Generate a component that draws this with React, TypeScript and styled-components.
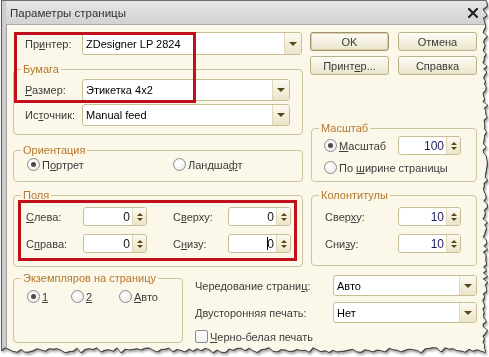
import React from 'react'
import styled, { createGlobalStyle } from 'styled-components'

const GlobalStyle = createGlobalStyle`
  html, body {
    margin: 0;
    padding: 0;
    background: #ffffff;
  }
  body {
    font-family: "Liberation Sans", Arial, sans-serif;
    font-size: 11px;
    color: #3a3a3a;
  }
`

// torn paper edge on the right and bottom of the screenshot
const tornEdge = (() => {
  let s = 17
  const r = () => {
    s = (s * 9301 + 49297) % 233280
    return s / 233280
  }
  const pts: string[] = ['0 0', '484px 0']
  for (let y = 3; y < 349; y += 3) {
    pts.push(`${(481 + r() * 5).toFixed(1)}px ${y}px`)
  }
  for (let x = 484; x > 0; x -= 4) {
    pts.push(`${x}px ${(347 + r() * 5).toFixed(1)}px`)
  }
  pts.push('0 350px')
  return `polygon(${pts.join(', ')})`
})()

const Page = styled.div`
  width: 489px;
  height: 357px;
  filter: drop-shadow(1px 0 0 #4a4a4a) drop-shadow(0 1px 0 #4a4a4a)
    drop-shadow(1px 2px 1px rgba(0, 0, 0, 0.35));
`

const Window = styled.div`
  margin-left: 1px;
  width: 487px;
  height: 354px;
  box-sizing: border-box;
  display: flex;
  flex-direction: column;
  background: #cdcdcd;
  border-left: 1px solid #5c5c5c;
  border-top: 1px solid #6e6e6e;
  padding-left: 4px;
  clip-path: ${tornEdge};
`

const TitleBar = styled.div`
  height: 23px;
  flex: none;
  display: flex;
  align-items: center;
  justify-content: space-between;
  padding: 0 10px 0 4px;
  background: linear-gradient(#e6e6e6, #d2d2d2);
  color: #333;
  font-size: 11.5px;
`

const Body = styled.div`
  position: relative;
  flex: 1;
  background: #fbf8e9;
  border-top: 1px solid #a9a9a9;
  border-left: 1px solid #a3a3a3;
  padding: 7px 0 0 6px;
  display: flex;
  flex-direction: column;
`

const TopSection = styled.div`
  display: flex;
  gap: 7px;
`

const Column = styled.div<{ $w: number }>`
  width: ${(p) => p.$w}px;
  display: flex;
  flex-direction: column;
`

const Row = styled.div<{ $pl?: number }>`
  display: flex;
  align-items: center;
  padding-left: ${(p) => p.$pl ?? 0}px;
`

const Label = styled.span<{ $w: number; $ml?: number }>`
  width: ${(p) => p.$w}px;
  margin-left: ${(p) => p.$ml ?? 0}px;
  flex: none;
  white-space: nowrap;
  color: #3c3c3c;
`

const Acc = styled.span`
  text-decoration: underline;
  text-underline-offset: 1px;
`

const Group = styled.fieldset<{ $mt: number; $w?: number; $ml?: number }>`
  margin: ${(p) => p.$mt}px 0 0 ${(p) => p.$ml ?? 0}px;
  padding: 0;
  min-width: 0;
  width: ${(p) => (p.$w ? `${p.$w}px` : 'auto')};
  box-sizing: border-box;
  border: 1px solid #cdc4a0;
  border-radius: 4px;
`

const Legend = styled.legend`
  margin-left: 7px;
  padding: 0 2px;
  line-height: 12px;
  font-size: 11px;
  color: #b5762e;
`

const GroupContent = styled.div<{ $pad: string; $gap?: number }>`
  padding: ${(p) => p.$pad};
  display: flex;
  flex-direction: column;
  gap: ${(p) => p.$gap ?? 0}px;
`

const ComboBox = styled.div<{ $w: number; $h?: number }>`
  width: ${(p) => p.$w}px;
  height: ${(p) => p.$h ?? 22}px;
  box-sizing: border-box;
  flex: none;
  display: flex;
  border: 1px solid #c8bd94;
  border-radius: 3px;
  background: #ffffff;
  overflow: hidden;
`

const ComboText = styled.div`
  flex: 1;
  display: flex;
  align-items: center;
  padding: 0 3px;
  color: #000;
  font-size: 11px;
  white-space: nowrap;
`

const DropButton = styled.div`
  width: 16px;
  flex: none;
  display: flex;
  align-items: center;
  justify-content: center;
  border-left: 1px solid #e0d8b8;
  background: linear-gradient(#fcfaf1, #ebe4c9);
`

const Triangle = styled.span<{ $dir: 'up' | 'down'; $size: number }>`
  width: 0;
  height: 0;
  border-left: ${(p) => p.$size}px solid transparent;
  border-right: ${(p) => p.$size}px solid transparent;
  ${(p) =>
    p.$dir === 'down'
      ? `border-top: ${p.$size}px solid #5b4613;`
      : `border-bottom: ${p.$size}px solid #5b4613;`}
`

const SpinBox = styled.div<{ $w: number }>`
  width: ${(p) => p.$w}px;
  height: 19px;
  box-sizing: border-box;
  flex: none;
  display: flex;
  border: 1px solid #c8bd94;
  border-radius: 3px;
  background: #ffffff;
  overflow: hidden;
`

const SpinValue = styled.div<{ $color?: string }>`
  flex: 1;
  display: flex;
  align-items: center;
  justify-content: flex-end;
  padding-right: 2px;
  color: ${(p) => p.$color ?? '#111'};
  font-size: 12px;
`

const Caret = styled.span`
  display: inline-block;
  width: 1px;
  height: 13px;
  background: #000;
  margin-right: -1px;
`

const SpinButtons = styled.div`
  width: 13px;
  flex: none;
  display: flex;
  flex-direction: column;
  align-items: center;
  justify-content: center;
  gap: 2px;
  border-left: 1px solid #e0d8b8;
  background: linear-gradient(#fcfaf1, #ebe4c9);
`

const RadioOption = styled.label<{ $w?: number }>`
  display: flex;
  align-items: center;
  gap: 2px;
  width: ${(p) => (p.$w ? `${p.$w}px` : 'auto')};
  flex: none;
  color: #3c3c3c;
  white-space: nowrap;
`

const RadioCircle = styled.span<{ $checked?: boolean }>`
  position: relative;
  width: 13px;
  height: 13px;
  flex: none;
  box-sizing: border-box;
  border-radius: 50%;
  border: 1px solid #8a8a8a;
  background: radial-gradient(circle at 40% 40%, #ffffff, #e9e9e9);

  &::after {
    content: '';
    display: ${(p) => (p.$checked ? 'block' : 'none')};
    position: absolute;
    left: 3px;
    top: 3px;
    width: 5px;
    height: 5px;
    border-radius: 50%;
    background: #4a4a4a;
  }
`

const CheckBoxSquare = styled.span`
  width: 13px;
  height: 13px;
  flex: none;
  box-sizing: border-box;
  border: 1px solid #8c8c8c;
  border-radius: 2px;
  background: linear-gradient(#ffffff, #f0f0f0);
`

const ButtonGrid = styled.div`
  display: grid;
  grid-template-columns: 79px 79px;
  column-gap: 9px;
  row-gap: 5px;
`

const Button = styled.div<{ $default?: boolean }>`
  height: 19px;
  box-sizing: border-box;
  display: flex;
  align-items: center;
  justify-content: center;
  border: 1px solid ${(p) => (p.$default ? '#9c9270' : '#b9af88')};
  border-radius: 3px;
  background: linear-gradient(#fdfcf5, #ebe5cb);
  box-shadow: ${(p) => (p.$default ? 'inset 0 0 0 1px #d9cfa8' : 'none')};
  color: #3a3a3a;
`

const BottomSection = styled.div`
  display: flex;
  margin-top: 5px;
`

const OptionsGrid = styled.div`
  margin-left: 12px;
  padding-top: 3px;
  display: grid;
  grid-template-columns: 138px 144px;
  row-gap: 6px;
  align-items: center;
`

const CheckRow = styled.label`
  grid-column: 1 / 3;
  display: flex;
  align-items: center;
  gap: 2px;
  margin-top: 1px;
  color: #3c3c3c;
`

const Highlight = styled.div<{ $x: number; $y: number; $w: number; $h: number }>`
  position: absolute;
  left: ${(p) => p.$x}px;
  top: ${(p) => p.$y}px;
  width: ${(p) => p.$w}px;
  height: ${(p) => p.$h}px;
  box-sizing: border-box;
  border: 3px solid #c0101c;
  pointer-events: none;
`

function CloseIcon() {
  return (
    <svg width="10" height="10" viewBox="0 0 10 10">
      <path d="M1 1 L9 9 M9 1 L1 9" stroke="#222" strokeWidth="2.2" strokeLinecap="square" />
    </svg>
  )
}

function Combo({ w, h, value }: { w: number; h?: number; value: string }) {
  return (
    <ComboBox $w={w} $h={h}>
      <ComboText>{value}</ComboText>
      <DropButton>
        <Triangle $dir="down" $size={4} />
      </DropButton>
    </ComboBox>
  )
}

function Spin({ w, value, color, caret }: { w: number; value: string; color?: string; caret?: boolean }) {
  return (
    <SpinBox $w={w}>
      <SpinValue $color={color}>
        {caret && <Caret />}
        {value}
      </SpinValue>
      <SpinButtons>
        <Triangle $dir="up" $size={3} />
        <Triangle $dir="down" $size={3} />
      </SpinButtons>
    </SpinBox>
  )
}

function Radio({ checked, w, children }: { checked?: boolean; w?: number; children: React.ReactNode }) {
  return (
    <RadioOption $w={w}>
      <RadioCircle $checked={checked} />
      <span>{children}</span>
    </RadioOption>
  )
}

export default function App() {
  return (
    <Page>
      <GlobalStyle />
      <Window>
        <TitleBar>
          <span>Параметры страницы</span>
          <CloseIcon />
        </TitleBar>
        <Body>
          <TopSection>
            <Column $w={290}>
              <Row $pl={12}>
                <Label $w={57}>
                  Пр<Acc>и</Acc>нтер:
                </Label>
                <Combo w={220} h={23} value="ZDesigner LP 2824" />
              </Row>

              <Group $mt={8}>
                <Legend>Бумага</Legend>
                <GroupContent $pad="4px 0 8px 11px" $gap={3}>
                  <Row>
                    <Label $w={57}>
                      <Acc>Р</Acc>азмер:
                    </Label>
                    <Combo w={208} value="Этикетка 4x2" />
                  </Row>
                  <Row>
                    <Label $w={57}>
                      Ис<Acc>т</Acc>очник:
                    </Label>
                    <Combo w={208} value="Manual feed" />
                  </Row>
                </GroupContent>
              </Group>

              <Group $mt={9}>
                <Legend>Ориентация</Legend>
                <GroupContent $pad="2px 0 10px 13px">
                  <Row>
                    <Radio checked w={146}>
                      П<Acc>о</Acc>ртрет
                    </Radio>
                    <Radio>
                      Ландша<Acc>ф</Acc>т
                    </Radio>
                  </Row>
                </GroupContent>
              </Group>

              <Group $mt={7}>
                <Legend>Поля</Legend>
                <GroupContent $pad="6px 0 13px 12px" $gap={8}>
                  <Row>
                    <Label $w={57}>
                      <Acc>С</Acc>лева:
                    </Label>
                    <Spin w={64} value="0" />
                    <Label $w={55} $ml={26}>
                      С<Acc>в</Acc>ерху:
                    </Label>
                    <Spin w={63} value="0" />
                  </Row>
                  <Row>
                    <Label $w={57}>
                      С<Acc>п</Acc>рава:
                    </Label>
                    <Spin w={64} value="0" />
                    <Label $w={55} $ml={26}>
                      С<Acc>н</Acc>изу:
                    </Label>
                    <Spin w={63} value="0" caret />
                  </Row>
                </GroupContent>
              </Group>
            </Column>

            <Column $w={167}>
              <ButtonGrid>
                <Button $default>OK</Button>
                <Button>Отмена</Button>
                <Button>
                  Принт<Acc>е</Acc>р...
                </Button>
                <Button>Справка</Button>
              </ButtonGrid>

              <Group $mt={47} $ml={1}>
                <Legend>Масштаб</Legend>
                <GroupContent $pad="2px 0 7px 12px" $gap={6}>
                  <Row>
                    <Radio checked w={74}>
                      <Acc>М</Acc>асштаб
                    </Radio>
                    <Spin w={63} value="100" color="#1c1c5a" />
                  </Row>
                  <Row>
                    <Radio>
                      По <Acc>ш</Acc>ирине страницы
                    </Radio>
                  </Row>
                </GroupContent>
              </Group>

              <Group $mt={7} $ml={1}>
                <Legend>Колонтитулы</Legend>
                <GroupContent $pad="6px 0 12px 13px" $gap={8}>
                  <Row>
                    <Label $w={73}>
                      Свер<Acc>х</Acc>у:
                    </Label>
                    <Spin w={63} value="10" color="#1c1c5a" />
                  </Row>
                  <Row>
                    <Label $w={73}>
                      Сни<Acc>з</Acc>у:
                    </Label>
                    <Spin w={63} value="10" color="#1c1c5a" />
                  </Row>
                </GroupContent>
              </Group>
            </Column>
          </TopSection>

          <BottomSection>
            <Group $mt={0} $w={170}>
              <Legend>Экземпляров на страницу</Legend>
              <GroupContent $pad="6px 0 10px 13px">
                <Row>
                  <Radio checked w={44}>
                    <Acc>1</Acc>
                  </Radio>
                  <Radio w={48}>
                    <Acc>2</Acc>
                  </Radio>
                  <Radio>
                    <Acc>А</Acc>вто
                  </Radio>
                </Row>
              </GroupContent>
            </Group>

            <OptionsGrid>
              <Label $w={138}>
                Чередование страни<Acc>ц</Acc>:
              </Label>
              <Combo w={144} h={21} value="Авто" />
              <Label $w={138}>Двусторонняя печать:</Label>
              <Combo w={144} h={21} value="Нет" />
              <CheckRow>
                <CheckBoxSquare />
                <span>
                  <Acc>Ч</Acc>ерно-белая печать
                </span>
              </CheckRow>
            </OptionsGrid>
          </BottomSection>

          <Highlight $x={7} $y={7} $w={182} $h={71} />
          <Highlight $x={11} $y={175} $w={279} $h={61} />
        </Body>
      </Window>
    </Page>
  )
}
